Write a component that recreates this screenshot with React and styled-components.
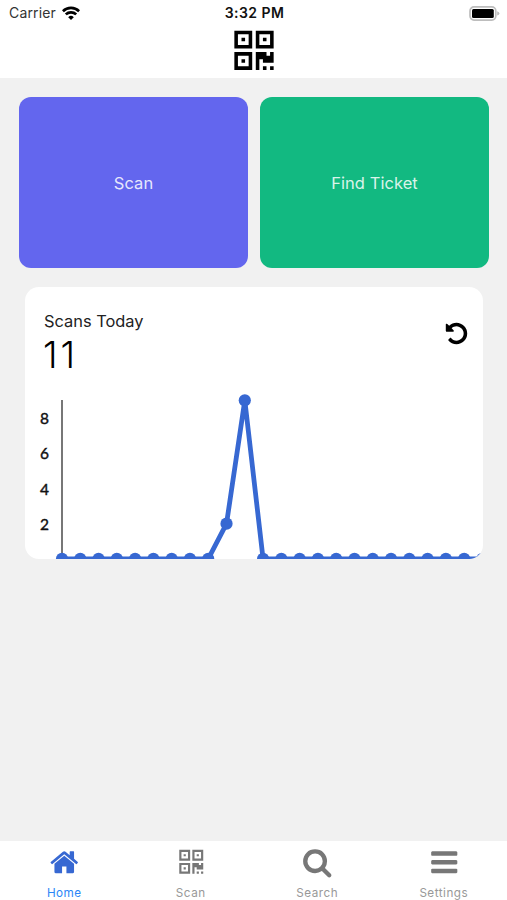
import React from 'react';
import styled, { createGlobalStyle } from 'styled-components';

const GlobalStyle = createGlobalStyle`
  * { box-sizing: border-box; }
  body { margin: 0; font-family: Inter, "Liberation Sans", sans-serif; background: #f1f1f1; }
`;

const Screen = styled.div`
  display: flex;
  flex-direction: column;
  height: 900px;
  width: 507px;
  overflow: hidden;
  background: #f1f1f1;
`;

const Header = styled.header`
  height: 78px;
  background: #fff;
  display: flex;
  flex-direction: column;
  align-items: center;
`;

const StatusBar = styled.div`
  width: 100%;
  height: 26px;
  padding: 0 7px 0 9px;
  display: grid;
  grid-template-columns: 1fr auto 1fr;
  align-items: center;
  color: #111;
`;

const Carrier = styled.div`
  display: flex;
  align-items: center;
  gap: 6px;
  font-size: 14px;
  line-height: 26px;
  letter-spacing: 0.15px;
  color: #333;
`;

const Clock = styled.div`
  font-size: 14px;
  font-weight: 600;
  line-height: 26px;
  letter-spacing: 0.45px;
`;

const BatterySlot = styled.div`
  display: flex;
  justify-content: flex-end;
`;

const Icon = styled.svg`
  display: block;
  flex: none;
  width: ${(p) => p.$size}px;
  height: ${(p) => p.$size}px;
  fill: currentColor;
`;

const Logo = styled.div`
  color: #000;
  margin-top: -0.5px;
`;

const Actions = styled.div`
  display: grid;
  grid-template-columns: 1fr 1fr;
  gap: 12px;
  padding: 19px 18px 0 19px;
`;

const ActionButton = styled.button`
  height: 171px;
  border: 0;
  border-radius: 12px;
  background: ${(p) => p.$color};
  color: rgba(255, 255, 255, 0.86);
  font: 400 16.5px Inter, sans-serif;
  letter-spacing: 0.05px;
`;

const Card = styled.section`
  margin: 19px 24px 0 25px;
  height: 272px;
  border-radius: 14px;
  background: #fff;
  overflow: hidden;
`;

const CardTop = styled.div`
  display: flex;
  justify-content: space-between;
  height: 103px;
  padding: 23px 14.5px 0 19px;
`;

const CardTitle = styled.div`
  font-size: 16.4px;
  line-height: 22px;
  color: #222;
`;

const Total = styled.div`
  margin-left: -1px;
  font-size: 37px;
  font-weight: 300;
  line-height: 45px;
  letter-spacing: 3px;
  color: #000;
`;

const Refresh = styled.div`
  padding-top: 11px;
  color: #000;
`;

const Chart = styled.svg`
  display: block;
  width: 458px;
  height: 169px;
`;

const TickLabel = styled.text`
  font-family: Lato, sans-serif;
  font-size: 15.5px;
  font-weight: 400;
  fill: #111;
  stroke: #111;
  stroke-width: 0.4px;
  text-anchor: end;
`;

const TabBar = styled.nav`
  margin-top: auto;
  height: 59px;
  padding-left: 1px;
  background: #fff;
  display: grid;
  grid-template-columns: repeat(4, 1fr);
`;

const Tab = styled.div`
  display: flex;
  flex-direction: column;
  align-items: center;
  padding-top: 6px;
  color: ${(p) => (p.$active ? '#3768d2' : '#777')};
`;

const TabLabel = styled.span`
  margin-top: 7px;
  font-size: 11.7px;
  line-height: 16px;
  letter-spacing: 0.5px;
  color: ${(p) => (p.$active ? '#2c86f7' : '#999')};
`;

const paths = {
  home: 'M1472 992v480q0 26-19 45t-45 19h-384v-384h-256v384h-384q-26 0-45-19t-19-45v-480q0-1 .5-3t.5-3l575-474 575 474q1 2 1 6zm223-69l-62 74q-8 9-21 11h-3q-13 0-21-7l-692-577-692 577q-12 8-24 7-13-2-21-11l-62-74q-8-10-7-23.5t11-21.5l719-599q32-26 76-26t76 26l244 204v-195q0-14 9-23t23-9h192q14 0 23 9t9 23v408l219 182q10 8 11 21.5t-7 23.5z',
  search: 'M1216 832q0-185-131.5-316.5t-316.5-131.5-316.5 131.5-131.5 316.5 131.5 316.5 316.5 131.5 316.5-131.5 131.5-316.5zm512 832q0 52-38 90t-90 38q-54 0-90-38l-343-342q-179 124-399 124-143 0-273.5-55.5t-225-150-150-225-55.5-273.5 55.5-273.5 150-225 225-150 273.5-55.5 273.5 55.5 225 150 150 225 55.5 273.5q0 220-124 399l343 343q37 37 37 90z',
  bars: 'M1664 1344v128q0 26-19 45t-45 19h-1408q-26 0-45-19t-19-45v-128q0-26 19-45t45-19h1408q26 0 45 19t19 45zm0-512v128q0 26-19 45t-45 19h-1408q-26 0-45-19t-19-45v-128q0-26 19-45t45-19h1408q26 0 45 19t19 45zm0-512v128q0 26-19 45t-45 19h-1408q-26 0-45-19t-19-45v-128q0-26 19-45t45-19h1408q26 0 45 19t19 45z',
  undo: 'M1664 896q0 156-61 298t-164 245-245 164-298 61q-172 0-327-72.5t-264-204.5q-7-10-6.5-22.5t8.5-20.5l137-138q10-9 25-9 16 2 23 12 73 95 179 147t225 52q104 0 198.5-40.5t163.5-109.5 109.5-163.5 40.5-198.5-40.5-198.5-109.5-163.5-163.5-109.5-198.5-40.5q-98 0-188 35.5t-160 101.5l137 138q31 30 14 69-17 40-59 40h-448q-26 0-45-19t-19-45v-448q0-42 40-59 39-17 69 14l130 129q107-101 244.5-156.5t284.5-55.5q156 0 298 61t245 164 164 245 61 298z',
};

const Glyph = ({ name, size }) => (
  <Icon $size={size} viewBox="0 0 1792 1792"><path d={paths[name]} /></Icon>
);

const QrGlyph = ({ size }) => (
  <Icon $size={size} viewBox="-1.5 -1.3 14 14">
    <path
      fillRule="evenodd"
      d="M0 0h5v5H0zM1 1v3h3V1zM2 2h1v1H2zM6 0h5v5H6zM7 1v3h3V1zM8 2h1v1H8zM0 6h5v5H0zM1 7v3h3V7zM2 8h1v1H2zM6 6h3v1h1V6h1v3H8V8H7v3H6zM8 10h1v1H8zM10 10h1v1h-1z"
    />
  </Icon>
);

const Wifi = () => (
  <svg width="18" height="14" viewBox="0 0 18 14" fill="none" stroke="#000" strokeWidth="2.7">
    <path d="M0.9 5.2A11.6 11.6 0 0 1 17.1 5.2" />
    <path d="M3.8 8.4A7.5 7.5 0 0 1 14.2 8.4" />
    <path d="M9 14L6.2 11.2A4 4 0 0 1 11.8 11.2Z" fill="#000" stroke="none" />
  </svg>
);

const Battery = () => (
  <svg width="31" height="15" viewBox="0 0 31 15">
    <rect x="1" y="0.9" width="25.8" height="13.2" rx="4" fill="#fff" stroke="#bdbdbd" strokeWidth="1.7" />
    <rect x="3" y="2.9" width="21.8" height="9.2" rx="1.5" fill="#000" />
    <path d="M28.2 5.2q2.2 .7 2.2 2.2t-2.2 2.2z" fill="#bbb" />
  </svg>
);

const scans = [0, 0, 0, 0, 0, 0, 0, 0, 0, 2, 9, 0, 0, 0, 0, 0, 0, 0, 0, 0, 0, 0, 0, 0];
const ticks = [8, 6, 4, 2];
const px = (i) => 37 + i * 18.28;
const py = (v) => 168.9 - v * 17.62;

const ScansChart = () => (
  <Chart viewBox="0 0 458 169">
    <line x1="37" y1="10" x2="37" y2="169" stroke="#4a4a4a" strokeWidth="1.5" />
    {ticks.map((t) => (
      <TickLabel key={t} x="24" y={py(t) + 6.3}>{t}</TickLabel>
    ))}
    <g fill="#3768d2">
      <polyline
        points={scans.map((v, i) => `${px(i)},${py(v)}`).join(' ')}
        fill="none"
        stroke="#3768d2"
        strokeWidth="4.8"
      />
      {scans.map((v, i) => <circle key={i} cx={px(i)} cy={py(v)} r="6.1" />)}
    </g>
  </Chart>
);

export default function App() {
  return (
    <Screen>
      <GlobalStyle />
      <Header>
        <StatusBar>
          <Carrier>Carrier <Wifi /></Carrier>
          <Clock>3:32 PM</Clock>
          <BatterySlot><Battery /></BatterySlot>
        </StatusBar>
        <Logo><QrGlyph size={50} /></Logo>
      </Header>
      <Actions>
        <ActionButton $color="#6366ee">Scan</ActionButton>
        <ActionButton $color="#12b981">Find Ticket</ActionButton>
      </Actions>
      <Card>
        <CardTop>
          <div>
            <CardTitle>Scans Today</CardTitle>
            <Total>11</Total>
          </div>
          <Refresh><Glyph name="undo" size={25} /></Refresh>
        </CardTop>
        <ScansChart />
      </Card>
      <TabBar>
        <Tab $active><Glyph name="home" size={30.5} /><TabLabel $active>Home</TabLabel></Tab>
        <Tab><QrGlyph size={30.5} /><TabLabel>Scan</TabLabel></Tab>
        <Tab><Glyph name="search" size={30.5} /><TabLabel>Search</TabLabel></Tab>
        <Tab><Glyph name="bars" size={30.5} /><TabLabel>Settings</TabLabel></Tab>
      </TabBar>
    </Screen>
  );
}
